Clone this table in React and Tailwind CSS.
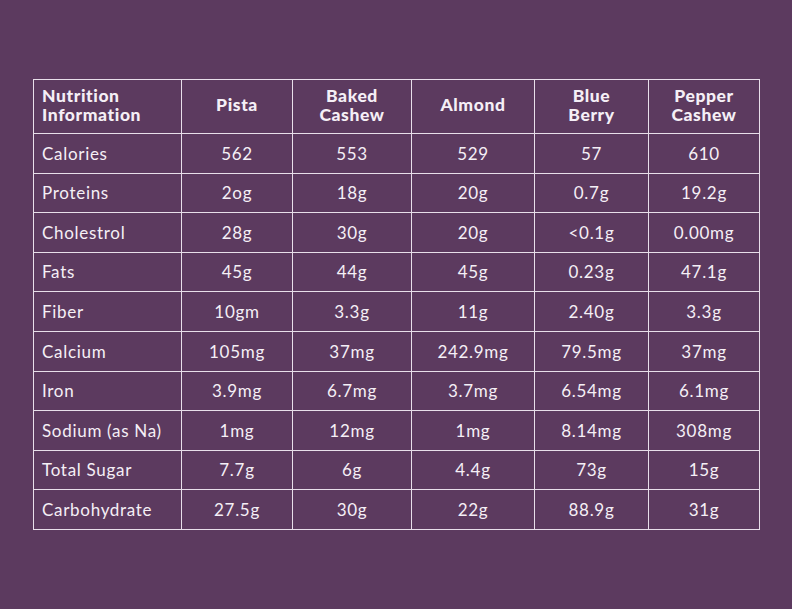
import React from "react";

const cols = [
  ["Nutrition", "Information"],
  ["Pista"],
  ["Baked", "Cashew"],
  ["Almond"],
  ["Blue", "Berry"],
  ["Pepper", "Cashew"],
];

const widths = ["w-[148px]", "w-[111px]", "w-[119px]", "w-[123px]", "w-[114px]", "w-[111px]"];

const rows = [
  ["Calories", "562", "553", "529", "57", "610"],
  ["Proteins", "2og", "18g", "20g", "0.7g", "19.2g"],
  ["Cholestrol", "28g", "30g", "20g", "<0.1g", "0.00mg"],
  ["Fats", "45g", "44g", "45g", "0.23g", "47.1g"],
  ["Fiber", "10gm", "3.3g", "11g", "2.40g", "3.3g"],
  ["Calcium", "105mg", "37mg", "242.9mg", "79.5mg", "37mg"],
  ["Iron", "3.9mg", "6.7mg", "3.7mg", "6.54mg", "6.1mg"],
  ["Sodium (as Na)", "1mg", "12mg", "1mg", "8.14mg", "308mg"],
  ["Total Sugar", "7.7g", "6g", "4.4g", "73g", "15g"],
  ["Carbohydrate", "27.5g", "30g", "22g", "88.9g", "31g"],
];

export default function App() {
  return (
    <div
      className="w-[792px] h-[609px] bg-[#5c3a5f] pt-[79px] pl-[33px]"
      style={{ fontFamily: "Lato, 'Open Sans', sans-serif" }}
    >
      <table className="border-collapse text-[#f5eff6] table-fixed w-[726px]">
        <thead>
          <tr className="h-[54px]">
            {cols.map((c, i) => (
              <th
                key={i}
                className={`${widths[i]} border-[1.5px] border-[#e8dfea] font-black text-[17.5px] leading-[19px] tracking-[0.6px] align-middle pb-[4px] ${
                  i === 0 ? "text-left pl-[8px]" : "text-center"
                }`}
              >
                {c.map((l, j) => (
                  <div key={j}>{l}</div>
                ))}
              </th>
            ))}
          </tr>
        </thead>
        <tbody>
          {rows.map((r, ri) => (
            <tr key={ri} className="h-[39.6px]">
              {r.map((v, ci) => (
                <td
                  key={ci}
                  className={`border-[1.5px] border-[#e8dfea] text-[17px] tracking-[0.7px] align-middle ${
                    ci === 0 ? "text-left pl-[8px]" : "text-center"
                  }`}
                >
                  {v}
                </td>
              ))}
            </tr>
          ))}
        </tbody>
      </table>
    </div>
  );
}
